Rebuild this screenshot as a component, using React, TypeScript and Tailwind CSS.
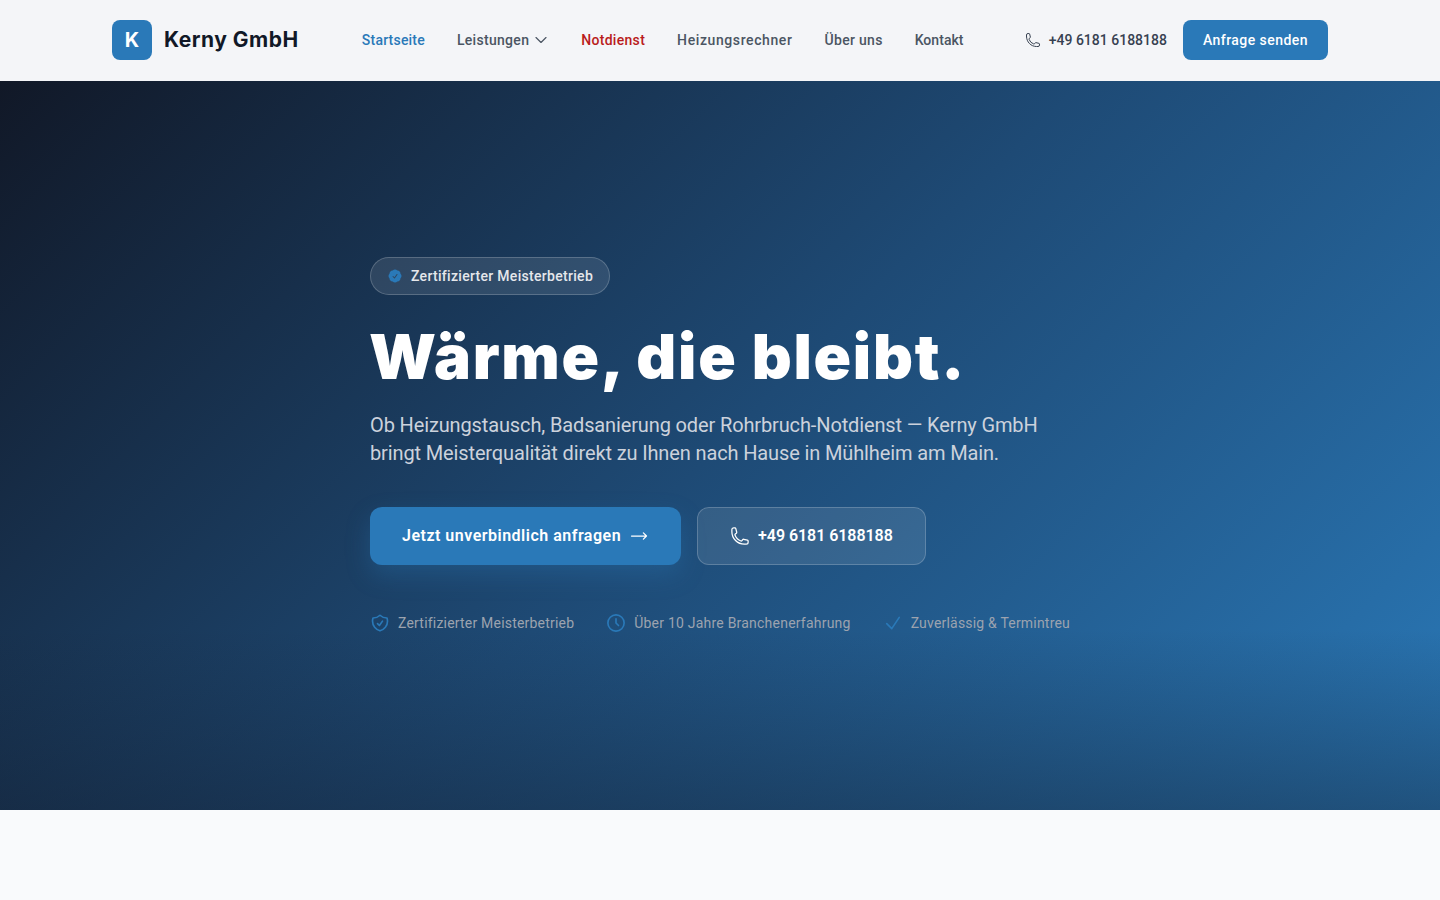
import { HiCheckBadge, HiOutlineArrowLongRight, HiOutlineCheck, HiOutlineChevronDown, HiOutlinePhone, HiOutlineShieldCheck } from "react-icons/hi2";

const navLinks = [
  { label: "Startseite", color: "text-[#2a79b8] tracking-[0.2px]" },
  { label: "Leistungen", color: "text-[#4b5563] tracking-[0.3px]", caret: true },
  { label: "Notdienst", color: "text-[#b91c1c] tracking-[0.3px]" },
  { label: "Heizungsrechner", color: "text-[#4b5563] tracking-[0.6px]" },
  { label: "Über uns", color: "text-[#4b5563] tracking-[0.3px]" },
  { label: "Kontakt", color: "text-[#4b5563] tracking-[0.05px]" },
];

function ClockIcon({ className, strokeWidth }: { className?: string; strokeWidth?: number }) {
  return (
    <svg viewBox="0 0 24 24" fill="none" stroke="currentColor" strokeWidth={strokeWidth} strokeLinecap="round" strokeLinejoin="round" className={className}>
      <circle cx="12" cy="12" r="9.75" />
      <path d="M12 7v5l3 3" />
    </svg>
  );
}

const perks = [
  { label: "Zertifizierter Meisterbetrieb", icon: HiOutlineShieldCheck, track: "tracking-[0.2px]" },
  { label: "Über 10 Jahre Branchenerfahrung", icon: ClockIcon, track: "tracking-[0.22px]" },
  { label: "Zuverlässig & Termintreu", icon: HiOutlineCheck, track: "tracking-[0.2px]" },
];

export default function App() {
  return (
    <div className="min-h-[900px] bg-[#f9fafc] font-['Roboto',sans-serif]">
      <header className="h-[81px] bg-[#f4f5f8] pb-px">
        <div className="mx-auto flex h-full w-[1216px] items-center justify-between">
          <div className="flex items-center gap-3">
            <div className="flex h-10 w-10 items-center justify-center rounded-lg bg-[#2a79b8] font-['Inter',sans-serif] text-xl font-bold text-white">K</div>
            <span className="font-['Inter',sans-serif] text-[21px] font-bold tracking-[0.5px] text-[#111827]">Kerny GmbH</span>
          </div>
          <nav className="ml-[2px] flex items-center gap-8">
            {navLinks.map((l) => (
              <a key={l.label} className={`flex items-center gap-1 text-sm font-medium ${l.color}`}>
                {l.label}
                {l.caret && <HiOutlineChevronDown className="h-4 w-4" strokeWidth={1.75} />}
              </a>
            ))}
          </nav>
          <div className="flex items-center gap-4">
            <a className="flex items-center gap-2 text-sm font-medium text-[#374151]">
              <HiOutlinePhone className="h-4 w-4" />
              +49 6181 6188188
            </a>
            <button className="flex h-10 items-center rounded-lg bg-[#2a79b8] px-5 text-sm font-medium tracking-[0.45px] text-white">Anfrage senden</button>
          </div>
        </div>
      </header>

      <section className="relative h-[729px] overflow-hidden bg-[linear-gradient(135deg,#111827_0%,#1e4a75_50%,#2a79b8_100%)]">
        <div className="absolute inset-x-0 bottom-0 h-[180px] bg-gradient-to-t from-[#111827]/40 to-transparent" />
        <div className="relative ml-[370px] flex w-[720px] flex-col pt-[176px]">
          <div className="flex h-[38px] w-fit items-center gap-2 rounded-full border border-white/20 bg-white/10 px-4 text-sm font-medium tracking-[0.3px] text-[#e5e7eb]">
            <HiCheckBadge className="h-4 w-4 text-[#2a79b8]" />
            Zertifizierter Meisterbetrieb
          </div>
          <h1 className="mt-[24px] -ml-px font-['Inter',sans-serif] text-[62px] leading-[76px] font-black tracking-[1.75px] text-white">Wärme, die bleibt.</h1>
          <p className="mt-4 text-xl leading-7 tracking-[-0.13px] text-[#ccd2dc]">
            Ob Heizungstausch, Badsanierung oder Rohrbruch-Notdienst — Kerny GmbH
            <br />
            bringt Meisterqualität direkt zu Ihnen nach Hause in Mühlheim am Main.
          </p>
          <div className="mt-10 flex gap-4">
            <button className="flex h-[58px] items-center gap-2 rounded-xl bg-[#2a79b8] px-8 text-base font-semibold tracking-[0.5px] text-white shadow-[0_10px_24px_rgba(42,121,184,0.3)]">
              Jetzt unverbindlich anfragen
              <HiOutlineArrowLongRight className="h-5 w-5" />
            </button>
            <button className="flex h-[58px] items-center gap-2 rounded-xl border border-white/20 bg-white/10 px-8 text-base font-semibold tracking-[-0.06px] text-white">
              <HiOutlinePhone className="h-5 w-5" />
              +49 6181 6188188
            </button>
          </div>
          <div className="mt-[48px] flex gap-8">
            {perks.map((p) => (
              <div key={p.label} className={`flex items-center gap-2 text-sm text-[#9ca3af] ${p.track}`}>
                <p.icon className="h-5 w-5 text-[#2a79b8]" strokeWidth={2} />
                {p.label}
              </div>
            ))}
          </div>
        </div>
      </section>
    </div>
  );
}
